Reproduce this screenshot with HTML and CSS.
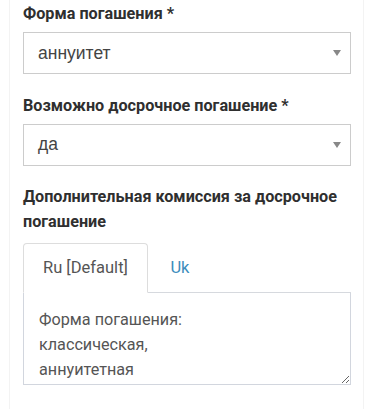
FILE: index.html
```html
<!DOCTYPE html>
<html lang="ru">
<head>
<meta charset="utf-8">
<link rel="stylesheet" href="styles.css">
</head>
<body>
<div class="panel">
  <div class="form-group">
    <label class="label">Форма погашения *</label>
    <div class="select"><span class="select-value">аннуитет</span><span class="arrow"></span></div>
  </div>
  <div class="form-group">
    <label class="label">Возможно досрочное погашение *</label>
    <div class="select"><span class="select-value">да</span><span class="arrow"></span></div>
  </div>
  <div class="form-group">
    <label class="label label-tabs">Дополнительная комиссия за досрочное погашение</label>
    <ul class="tabs">
      <li class="tab active">Ru [Default]</li>
      <li class="tab link">Uk</li>
    </ul>
    <textarea class="textarea">Форма погашения:
классическая,
аннуитетная</textarea>
  </div>
</div>
</body>
</html>
```
FILE: styles.css
```css
html, body {
  margin: 0;
  padding: 0;
  background: #ffffff;
}
body {
  font-family: Roboto, "Noto Sans", sans-serif;
  font-size: 16.5px;
  line-height: 25px;
  color: #333333;
}
.panel {
  margin-left: 9px;
  width: 355px;
  box-sizing: border-box;
  border-left: 1px solid #f3f3f3;
  border-right: 1px solid #f3f3f3;
  padding: 1px 12px 20px 13px;
  min-height: 409px;
}
.form-group {
  margin-bottom: 18.5px;
}
.label {
  display: block;
  font-weight: 700;
  font-size: 16.2px;
  color: #2f2f2f;
  margin-bottom: 6px;
}
.label-tabs {
  margin-bottom: 8.5px;
}
.select {
  height: 42px;
  box-sizing: border-box;
  border: 1px solid #cccccc;
  display: flex;
  align-items: center;
  justify-content: space-between;
  padding: 0 9px 0 14px;
  background: #ffffff;
}
.select-value {
  font-family: "Liberation Sans", Arial, sans-serif;
  font-size: 17.5px;
  color: #444444;
}
.arrow {
  width: 0;
  height: 0;
  border-style: solid;
  border-width: 6px 4px 0 4px;
  border-color: #888888 transparent transparent transparent;
}
.tabs {
  list-style: none;
  margin: 0;
  padding: 0;
  display: flex;
  border-bottom: 1px solid #d6d9de;
}
.tab {
  padding: 11.5px 19px;
  border: 1px solid transparent;
  border-radius: 4px 4px 0 0;
  margin-bottom: -1px;
  margin-right: 2.5px;
}
.tab.active {
  border-color: #dddddd #dddddd transparent #dddddd;
  background: #ffffff;
  color: #555555;
}
.tab.link {
  color: #3c8dbc;
}
.textarea {
  display: block;
  width: 100%;
  height: 92px;
  box-sizing: border-box;
  margin: 0;
  border: 1px solid #d2d6de;
  border-top: 0;
  padding: 14px 15px 2px 15px;
  font-family: Roboto, "Noto Sans", sans-serif;
  font-size: 16.2px;
  line-height: 25px;
  color: #555555;
  overflow: hidden;
  outline: none;
  background: #ffffff;
}
```
